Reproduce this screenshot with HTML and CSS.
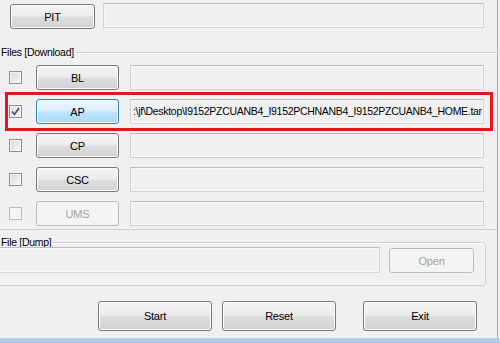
FILE: index.html
```html
<!DOCTYPE html>
<html lang="en">
<head>
    <meta charset="UTF-8">
    <meta name="viewport" content="width=device-width, initial-scale=1.0">
    <title>Odin3</title>
    <link rel="stylesheet" href="styles.css">
</head>
<body>
    <div class="window">
        <div class="pit-row">
            <button class="btn pit-btn">PIT</button>
            <div class="field pit-field"></div>
        </div>

        <fieldset class="group files-group">
            <legend>Files [Download]</legend>

            <div class="file-row">
                <span class="check"></span>
                <button class="btn file-btn">BL</button>
                <div class="field file-field"></div>
            </div>

            <div class="file-row marked">
                <span class="check checked">
                    <svg width="9" height="9" viewBox="0 0 9 9"><path d="M1 4.5 L3.5 7.5 L8 1" fill="none" stroke="#3f4f8f" stroke-width="1.6"/></svg>
                </span>
                <button class="btn file-btn active">AP</button>
                <div class="field file-field">:\jf\Desktop\I9152PZCUANB4_I9152PCHNANB4_I9152PZCUANB4_HOME.tar</div>
            </div>

            <div class="file-row">
                <span class="check"></span>
                <button class="btn file-btn">CP</button>
                <div class="field file-field"></div>
            </div>

            <div class="file-row">
                <span class="check"></span>
                <button class="btn file-btn">CSC</button>
                <div class="field file-field"></div>
            </div>

            <div class="file-row">
                <span class="check disabled"></span>
                <button class="btn file-btn disabled">UMS</button>
                <div class="field file-field"></div>
            </div>
        </fieldset>

        <fieldset class="group dump-group">
            <legend>File [Dump]</legend>
            <div class="dump-row">
                <div class="field dump-field"></div>
                <button class="btn open-btn disabled">Open</button>
            </div>
        </fieldset>

        <div class="actions">
            <button class="btn action-btn">Start</button>
            <button class="btn action-btn">Reset</button>
            <button class="btn action-btn exit-btn">Exit</button>
        </div>
    </div>
    <div class="frame-bottom"></div>
</body>
</html>
```

FILE: styles.css
```css
* {
    margin: 0;
    padding: 0;
    box-sizing: border-box;
}

body {
    font-family: "Liberation Sans", Arial, sans-serif;
    font-size: 10.5px;
    letter-spacing: -0.3px;
    color: #000;
    background-color: #f0f0f0;
    width: 500px;
    height: 343px;
    overflow: hidden;
}

.window {
    width: 498px;
    height: 338px;
    border-right: 1px solid #a7a7a7;
}

/* buttons */
.btn {
    font-family: inherit;
    font-size: 11px;
    letter-spacing: -0.2px;
    color: #000;
    border: 1px solid #7a7a7a;
    border-radius: 3px;
    background: linear-gradient(#f4f4f4 0%, #ececec 48%, #dedede 52%, #d2d2d2 100%);
    box-shadow: inset 0 0 0 1px #fbfbfb;
}

.btn.active {
    border-color: #3c7fb1;
    background: linear-gradient(#eaf6fd 0%, #d9f0fc 48%, #bee6fd 52%, #a7d9f5 100%);
    box-shadow: inset 0 0 0 1px #f3fbff;
}

.btn.disabled {
    color: #a3a3a3;
    border-color: #b8bcbf;
    background: #f4f4f4;
    box-shadow: none;
}

/* read-only text boxes */
.field {
    height: 25px;
    border: 1px solid #d2d2d2;
    border-top-color: #bdbdbd;
    background-color: #f0f0f0;
    box-shadow: inset 0 0 0 1px #f7f7f7;
    padding: 0 2px;
    line-height: 23px;
    white-space: nowrap;
    overflow: hidden;
}

.pit-row {
    display: flex;
    align-items: flex-start;
    gap: 8px;
    padding: 3px 0 0 10px;
    height: 29px;
}

.pit-btn {
    width: 85px;
    height: 25px;
    margin-top: 1px;
}

.pit-field {
    width: 381px;
}

/* group boxes */
.group {
    border: 1px solid #cfcfcf;
    border-radius: 3px;
    box-shadow: inset 1px 1px 0 #fff;
    margin-left: -6px;
    min-width: 0;
}

.group legend {
    line-height: 12px;
    padding: 0 2px;
    margin-left: 4px;
}

.files-group {
    margin-top: 17px;
    width: 504px;
    border-right: none;
    padding: 7px 0 3px 0;
    display: flex;
    flex-direction: column;
    gap: 9px;
}

.file-row {
    display: flex;
    align-items: center;
    height: 25px;
    padding-left: 14px;
    position: relative;
}

.file-row.marked::after {
    content: "";
    position: absolute;
    left: 10px;
    right: 5px;
    top: -7px;
    bottom: -7px;
    border: 3px solid #e3161e;
}

.check {
    width: 13px;
    height: 13px;
    border: 1px solid #8e8f8f;
    background: linear-gradient(135deg, #d7d9dc, #f8f8f8);
    box-shadow: inset 0 0 0 1px #f4f4f4;
    display: flex;
    align-items: center;
    justify-content: center;
}

.check.disabled {
    border-color: #bcbcbc;
    background: #f4f4f4;
}

.file-btn {
    width: 83px;
    height: 25px;
    margin-left: 14px;
}

.file-field {
    width: 354px;
    margin-left: 11px;
}

.dump-group {
    margin-top: 7px;
    width: 492px;
    padding: 0 0 12px 0;
}

.dump-group legend {
    line-height: 10px;
}

.dump-row {
    display: flex;
    align-items: flex-start;
}

.dump-field {
    width: 386px;
    height: 26px;
    margin-left: -1px;
}

.open-btn {
    width: 85px;
    height: 25px;
    margin: 1px 0 0 9px;
}

.actions {
    display: flex;
    gap: 10px;
    padding-left: 98px;
    margin-top: 15px;
}

.action-btn {
    width: 114px;
    height: 30px;
}

.exit-btn {
    margin-left: 17px;
}

.frame-bottom {
    height: 5px;
    background: linear-gradient(#bcd4ec, #a9c7e6);
}
```
